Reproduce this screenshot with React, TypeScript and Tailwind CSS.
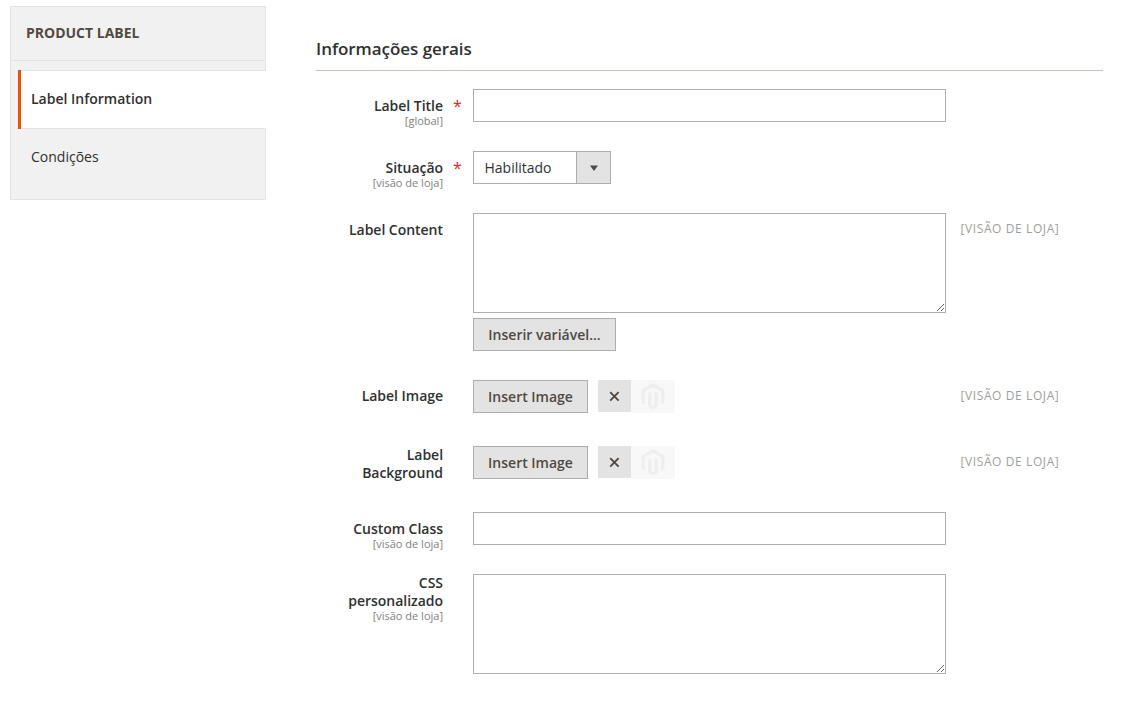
import React from "react";

type FieldProps = {
  label: string;
  scope?: string;
  required?: boolean;
  twoLine?: boolean;
  note?: boolean;
  className: string;
  labelClassName?: string;
  children: React.ReactNode;
};

function Field({ label, scope, required, twoLine, note, className, labelClassName = "pt-2", children }: FieldProps) {
  return (
    <div className={`flex items-start ${className}`}>
      <div className={`w-[127px] shrink-0 text-right ${twoLine ? "pl-6" : labelClassName}`}>
        <div className="text-[14px] leading-[18px] font-semibold tracking-[-0.03px] text-[#303030]">{label}</div>
        {scope && <div className="-mt-px text-[11px] leading-[13px] text-[#808080]">{scope}</div>}
      </div>
      <div className="w-[30px] shrink-0 pt-[7px] pl-[10px] text-[16px] leading-[20px] text-[#e22626]">
        {required && "*"}
      </div>
      <div className="w-[473px] shrink-0">{children}</div>
      {note && (
        <div className="ml-[14.5px] pt-[7px] text-[12px] leading-[18px] tracking-[0.6px] whitespace-nowrap text-[#9e9e9e]">
          [VISÃO DE LOJA]
        </div>
      )}
    </div>
  );
}

function TextInput({ label }: { label: string }) {
  return (
    <input
      aria-label={label}
      className="block h-[33px] w-[473px] border border-[#adadad] bg-white px-[10px] text-[14px] outline-none"
    />
  );
}

function TextArea({ label }: { label: string }) {
  return (
    <textarea
      aria-label={label}
      className="block h-[100px] w-[473px] resize border border-[#adadad] bg-white px-[10px] py-[8px] text-[14px] outline-none"
    />
  );
}

function Button({ children, className }: { children: React.ReactNode; className: string }) {
  return (
    <button
      className={`block h-[33px] border border-[#adadad] bg-[#e3e3e3] text-center text-[14px] leading-[31px] font-semibold whitespace-nowrap text-[#514943] ${className}`}
    >
      {children}
    </button>
  );
}

function ImagePicker() {
  return (
    <div className="flex items-start">
      <Button className="w-[115px]">Insert Image</Button>
      <button aria-label="Remove" className="ml-[10px] flex h-8 w-[33px] items-center justify-center bg-[#e3e3e3] pt-px">
        <svg width="11" height="11" viewBox="0 0 11 11" fill="none" stroke="#514943" strokeWidth="1.9">
          <path d="M1.2 1.2l8.4 8.4M9.6 1.2L1.2 9.6" />
        </svg>
      </button>
      <div className="flex h-[33px] w-[44px] justify-center bg-[#f8f8f8] pt-[3px]">
        <svg width="24" height="27" viewBox="0 0 24 27" fill="#eeeeee">
          <path d="M12 0l11.5 6.6v13.2l-3.3 1.9V8.5L12 3.8 3.8 8.5v13.2L.5 19.8V6.6z" />
          <path d="M7.1 10.4l3.3-1.9v13.6l1.6.9 1.6-.9V8.5l3.3 1.9v13.2L12 26.5l-4.9-2.9z" />
        </svg>
      </div>
    </div>
  );
}

export default function App() {
  return (
    <div className="flex h-[720px] w-[1126px] items-start overflow-hidden bg-white font-['Open_Sans','Noto_Sans',sans-serif]">
      <aside className="mt-[6px] ml-[10px] h-[194px] w-[256px] shrink-0 bg-[#f1f1f1]">
        <div className="h-[55px] border border-[#e3e3e3] pt-[16px] pl-[15px] text-[14px] leading-[20px] font-bold text-[#514943]">
          PRODUCT LABEL
        </div>
        <div className="h-[9px] border-x border-[#e3e3e3]" />
        <div className="flex h-[59px] border-l border-[#e3e3e3] pl-[7px]">
          <div className="w-[3px] bg-[#eb5202]" />
          <div className="flex-1 border-y border-[#e3e3e3] bg-white pt-[18px] pl-[10px] text-[14px] leading-[20px] font-semibold text-[#303030]">
            Label Information
          </div>
        </div>
        <div className="h-[71px] border-x border-b border-[#e3e3e3] pt-[18px] pl-5 text-[14px] leading-[20px] text-[#303030]">
          Condições
        </div>
      </aside>

      <main className="ml-[50px] w-[787px] shrink-0">
        <h2 className="h-[71px] border-b border-[#cac3b4] pt-[38px] text-[17px] leading-[22px] font-semibold tracking-[-0.05px] text-[#303030]">
          Informações gerais
        </h2>
        <Field label="Label Title" scope="[global]" required className="mt-[18px] h-[62px]">
          <TextInput label="Label Title" />
        </Field>
        <Field label="Situação" scope="[visão de loja]" required className="h-[62px]">
          <div className="flex h-[33px] w-[138px] border border-[#adadad] bg-white text-[14px] leading-[31px] text-[#303030]">
            <span className="flex-1 pl-[10.5px]">Habilitado</span>
            <span className="flex w-[34px] items-center justify-center border-l border-[#adadad] bg-[#e3e3e3]">
              <svg width="8" height="6" viewBox="0 0 8 6" fill="#514943">
                <path d="M0 .5h8L4 6z" />
              </svg>
            </span>
          </div>
        </Field>
        <Field label="Label Content" note className="h-[167px]">
          <TextArea label="Label Content" />
          <Button className="mt-[5px] w-[143px]">Inserir variável...</Button>
        </Field>
        <Field label="Label Image" note className="h-[66px]" labelClassName="pt-[7px]">
          <ImagePicker />
        </Field>
        <Field label="Label Background" twoLine note className="h-[66px]">
          <ImagePicker />
        </Field>
        <Field label="Custom Class" scope="[visão de loja]" className="h-[62px]">
          <TextInput label="Custom Class" />
        </Field>
        <Field label="CSS personalizado" scope="[visão de loja]" twoLine className="h-[100px]">
          <TextArea label="CSS personalizado" />
        </Field>
      </main>
    </div>
  );
}
